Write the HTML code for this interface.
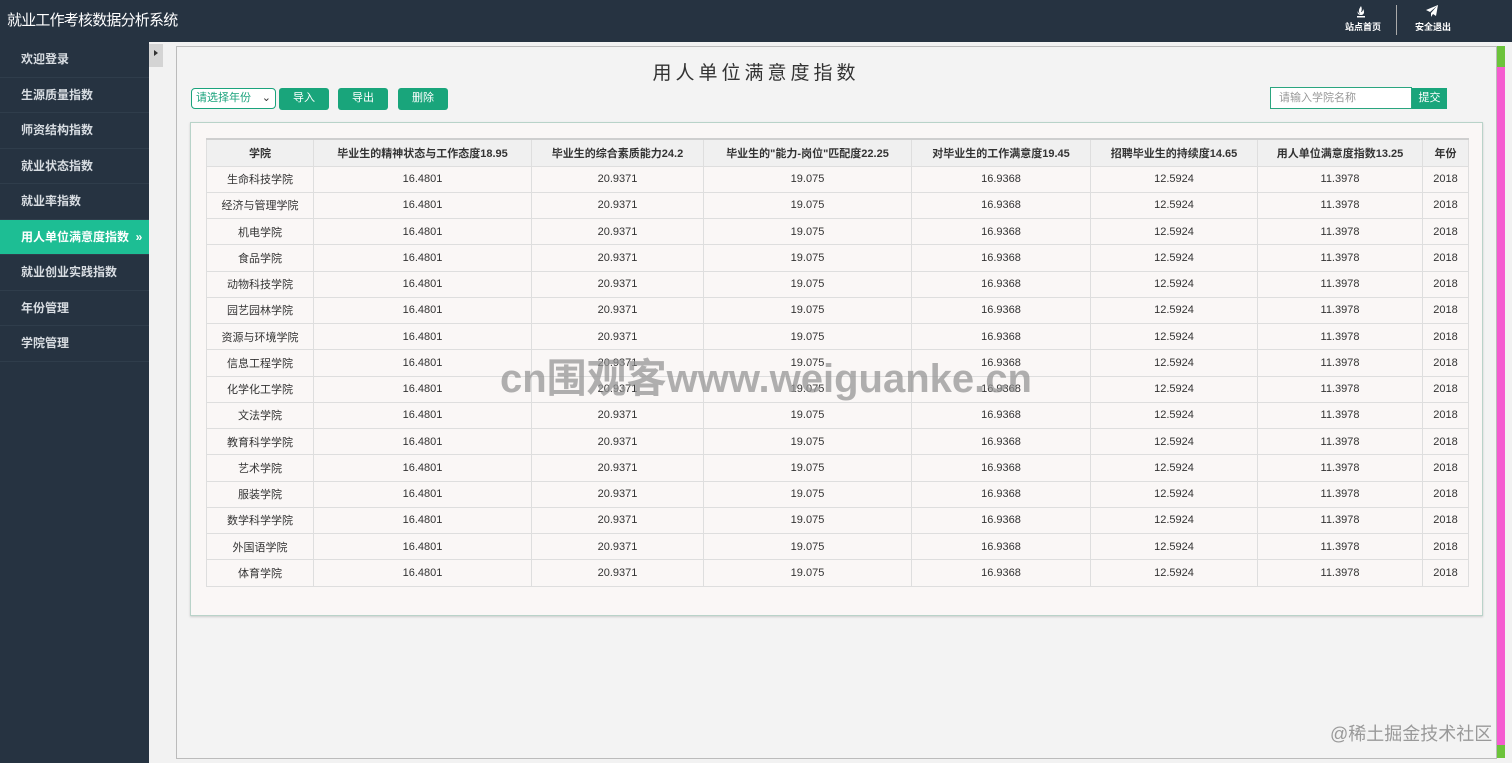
<!DOCTYPE html>
<html><head><meta charset="utf-8"><style>
*{margin:0;padding:0;box-sizing:border-box}
body{width:1512px;height:763px;overflow:hidden;background:#f2f2f2;font-family:"Liberation Sans","Noto Sans CJK SC",sans-serif;position:relative}
.hdr{position:absolute;left:0;top:0;width:1512px;height:42px;background:#263341}
.title{position:absolute;left:7px;top:9px;color:#fff;font-size:15px;letter-spacing:-0.8px}
.side{position:absolute;left:0;top:42px;width:149px;height:721px;background:#263341}
.side div{height:35.5px;line-height:35px;padding-left:21px;color:#d8dde2;font-size:12px;font-weight:bold;border-bottom:1px solid #2f3d4b}
.side div.act{background:#1dbe94;color:#fff}
.tog{position:absolute;left:149px;top:44px;width:14px;height:23px;background:#d4d4d4}
.frame{position:absolute;left:176px;top:46px;width:1321px;height:713px;border:1px solid #bbb;background:#f3f3f3}
.h1{position:absolute;left:0;width:1512px;top:58px;text-align:center;font-size:19px;letter-spacing:4px;color:#333}
.sel{position:absolute;left:191px;top:88px;width:85px;height:21px;border:1px solid #1aa37c;border-radius:4px;background:#fff;color:#1aa37c;font-size:11px;line-height:19px;padding-left:4px}
.btn{position:absolute;top:88px;width:50px;height:22px;background:#19a57b;border-radius:3px;color:#fff;font-size:11px;text-align:center;line-height:21px}
.inp{position:absolute;left:1270px;top:87px;width:142px;height:22px;border:1px solid #2aa57f;background:#fff;color:#999;font-size:11px;line-height:20px;padding-left:8px}
.sub{position:absolute;left:1412px;top:88px;width:35px;height:21px;background:#19a57b;color:#fff;font-size:11px;text-align:center;line-height:21px}
.box{position:absolute;left:190px;top:122px;width:1293px;height:494px;border:1px solid #b9d3c9;background:#faf7f6;box-shadow:0 1px 2px #ccc}
table{position:absolute;left:206px;top:138px;border-collapse:collapse;font-size:11px;color:#333}
td,th{border:1px solid #dedede;text-align:center;height:26.25px;padding:0}
th{background:#f0f0f0;font-weight:bold;height:27px;border-top:2px solid #cfcfcf;font-size:11px}
.sb{position:absolute;left:1497px;top:46px;width:8px;height:712px;background:#f55bd0}
.wm{position:absolute;left:500px;top:346px;font-size:40px;font-weight:bold;color:rgba(150,150,150,0.75);letter-spacing:0px}
.wm2{position:absolute;left:1330px;top:720px;font-size:18px;color:#999}
.ic{position:absolute;top:20px;color:#fff;font-size:9px;font-weight:bold}
</style></head><body>
<div class="hdr">
<div class="title">就业工作考核数据分析系统</div>
<svg style="position:absolute;left:1355px;top:5px" width="12" height="14" viewBox="0 0 12 14"><path d="M6 1C4 4 3 6 5 9 3 8 3 6 3 6 2 8 3 10 6 10 9 10 10 7 8 4 8 6 7 7 6 7 7 5 7 3 6 1Z" fill="#fff"/><rect x="2" y="11" width="8" height="1.5" fill="#fff"/></svg>
<div class="ic" style="left:1345px">站点首页</div>
<div style="position:absolute;left:1396px;top:5px;width:1px;height:30px;background:#aaa"></div>
<svg style="position:absolute;left:1425px;top:4px" width="14" height="14" viewBox="0 0 14 14"><path d="M13 1L1 6 5 8 12 2 6 9 6 13 8 10 11 12Z" fill="#fff"/></svg>
<div class="ic" style="left:1415px">安全退出</div>
</div>
<div class="side">
<div>欢迎登录</div><div>生源质量指数</div><div>师资结构指数</div><div>就业状态指数</div><div>就业率指数</div>
<div class="act">用人单位满意度指数 &nbsp;»</div><div>就业创业实践指数</div><div>年份管理</div><div>学院管理</div>
</div>
<div class="tog"><div style="position:absolute;left:5px;top:6px;width:0;height:0;border-left:4px solid #333;border-top:3px solid transparent;border-bottom:3px solid transparent"></div></div>
<div class="frame"></div>
<div class="sb"><div style="height:21px;background:#6cc33a"></div><div style="position:absolute;bottom:0;width:8px;height:13px;background:#6cc33a"></div></div>
<div class="h1">用人单位满意度指数</div>
<div class="sel">请选择年份<span style="position:absolute;right:4px;top:0;color:#333">⌄</span></div>
<div class="btn" style="left:279px">导入</div><div class="btn" style="left:338px">导出</div><div class="btn" style="left:398px">删除</div>
<div class="inp">请输入学院名称</div><div class="sub">提交</div>
<div class="box"></div>
<table>
<tr><th style="width:107px">学院</th><th style="width:218px">毕业生的精神状态与工作态度18.95</th><th style="width:172px">毕业生的综合素质能力24.2</th><th style="width:208px">毕业生的"能力-岗位"匹配度22.25</th><th style="width:179px">对毕业生的工作满意度19.45</th><th style="width:167px">招聘毕业生的持续度14.65</th><th style="width:165px">用人单位满意度指数13.25</th><th style="width:46px">年份</th></tr>
<tr><td>生命科技学院</td><td>16.4801</td><td>20.9371</td><td>19.075</td><td>16.9368</td><td>12.5924</td><td>11.3978</td><td>2018</td></tr>
<tr><td>经济与管理学院</td><td>16.4801</td><td>20.9371</td><td>19.075</td><td>16.9368</td><td>12.5924</td><td>11.3978</td><td>2018</td></tr>
<tr><td>机电学院</td><td>16.4801</td><td>20.9371</td><td>19.075</td><td>16.9368</td><td>12.5924</td><td>11.3978</td><td>2018</td></tr>
<tr><td>食品学院</td><td>16.4801</td><td>20.9371</td><td>19.075</td><td>16.9368</td><td>12.5924</td><td>11.3978</td><td>2018</td></tr>
<tr><td>动物科技学院</td><td>16.4801</td><td>20.9371</td><td>19.075</td><td>16.9368</td><td>12.5924</td><td>11.3978</td><td>2018</td></tr>
<tr><td>园艺园林学院</td><td>16.4801</td><td>20.9371</td><td>19.075</td><td>16.9368</td><td>12.5924</td><td>11.3978</td><td>2018</td></tr>
<tr><td>资源与环境学院</td><td>16.4801</td><td>20.9371</td><td>19.075</td><td>16.9368</td><td>12.5924</td><td>11.3978</td><td>2018</td></tr>
<tr><td>信息工程学院</td><td>16.4801</td><td>20.9371</td><td>19.075</td><td>16.9368</td><td>12.5924</td><td>11.3978</td><td>2018</td></tr>
<tr><td>化学化工学院</td><td>16.4801</td><td>20.9371</td><td>19.075</td><td>16.9368</td><td>12.5924</td><td>11.3978</td><td>2018</td></tr>
<tr><td>文法学院</td><td>16.4801</td><td>20.9371</td><td>19.075</td><td>16.9368</td><td>12.5924</td><td>11.3978</td><td>2018</td></tr>
<tr><td>教育科学学院</td><td>16.4801</td><td>20.9371</td><td>19.075</td><td>16.9368</td><td>12.5924</td><td>11.3978</td><td>2018</td></tr>
<tr><td>艺术学院</td><td>16.4801</td><td>20.9371</td><td>19.075</td><td>16.9368</td><td>12.5924</td><td>11.3978</td><td>2018</td></tr>
<tr><td>服装学院</td><td>16.4801</td><td>20.9371</td><td>19.075</td><td>16.9368</td><td>12.5924</td><td>11.3978</td><td>2018</td></tr>
<tr><td>数学科学学院</td><td>16.4801</td><td>20.9371</td><td>19.075</td><td>16.9368</td><td>12.5924</td><td>11.3978</td><td>2018</td></tr>
<tr><td>外国语学院</td><td>16.4801</td><td>20.9371</td><td>19.075</td><td>16.9368</td><td>12.5924</td><td>11.3978</td><td>2018</td></tr>
<tr><td>体育学院</td><td>16.4801</td><td>20.9371</td><td>19.075</td><td>16.9368</td><td>12.5924</td><td>11.3978</td><td>2018</td></tr>
</table>
<div class="wm">cn围观客www.weiguanke.cn</div>
<div class="wm2">@稀土掘金技术社区</div>
</body></html>
